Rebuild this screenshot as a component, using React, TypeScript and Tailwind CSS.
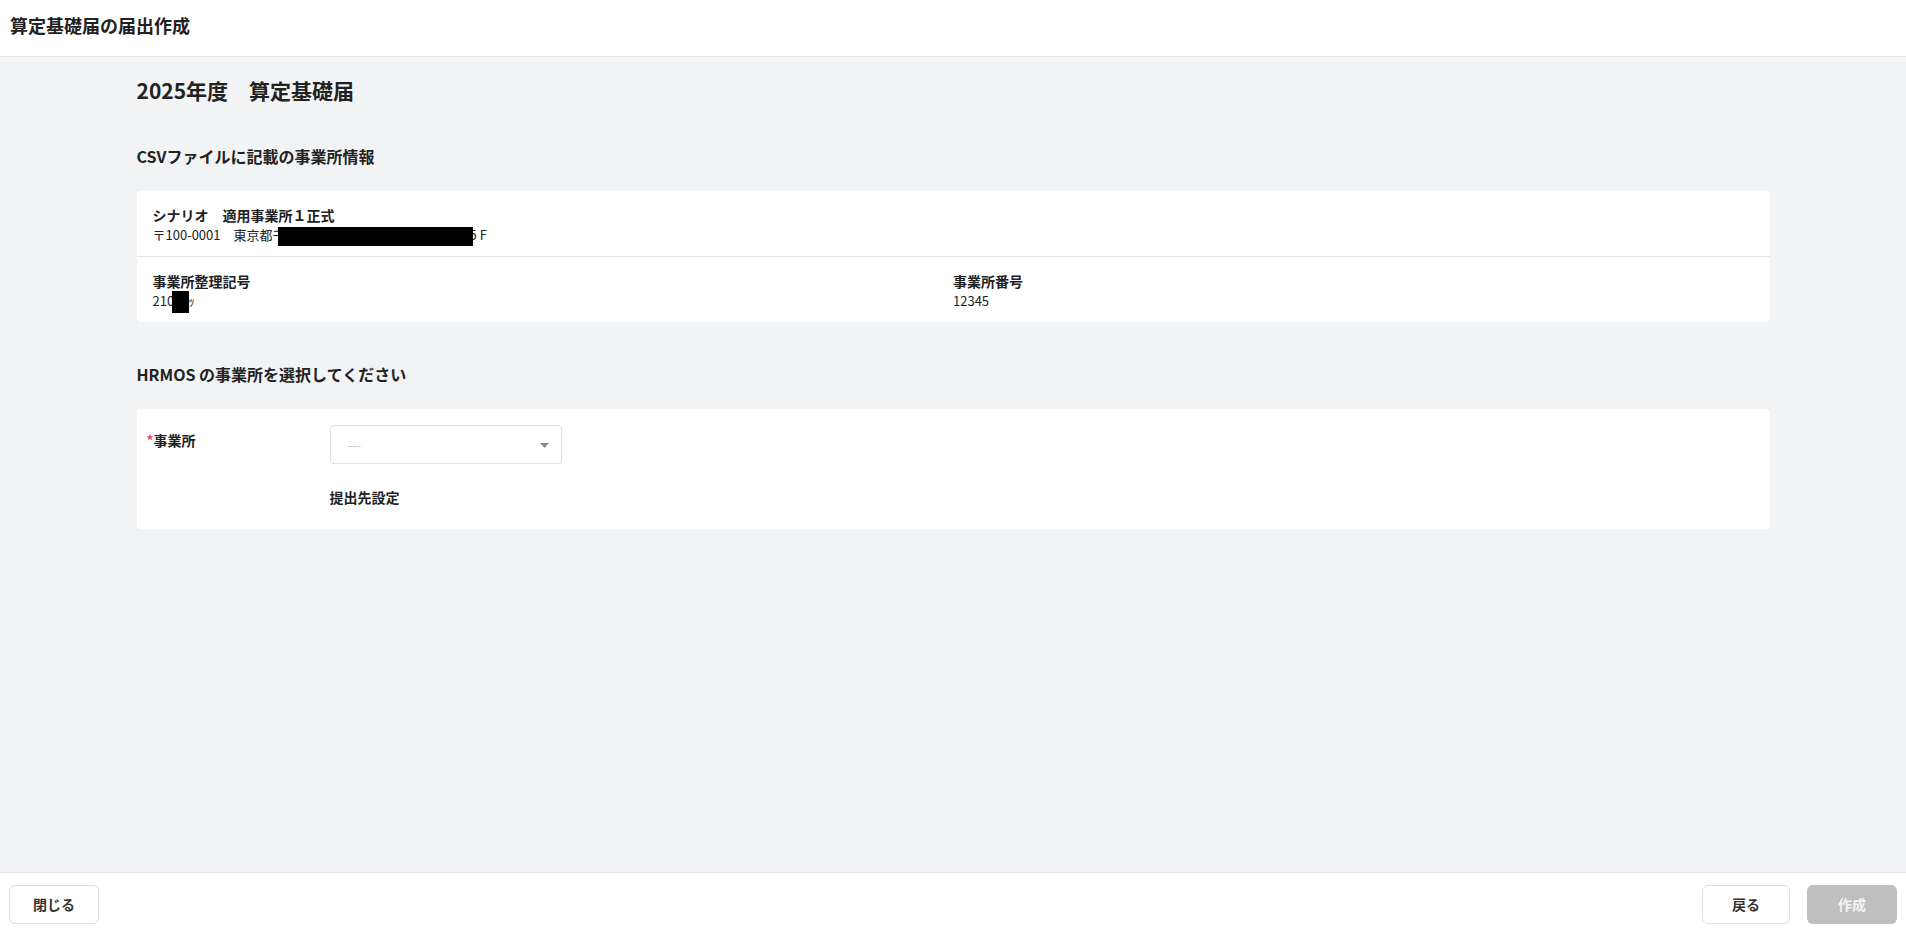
import React from "react";

export default function App() {
  return (
    <div className="h-screen flex flex-col bg-[#f2f3f5] text-[#222] font-['Noto_Sans_CJK_JP','Noto_Sans',sans-serif] overflow-hidden">
      {/* Header */}
      <header className="h-[57px] shrink-0 bg-white border-b border-[#e3e5ea] px-[10px] pt-[11px]">
        <h1 className="text-[18px] leading-7 font-bold text-[#222]">算定基礎届の届出作成</h1>
      </header>

      {/* Main */}
      <main className="flex-1 overflow-hidden">
        <div className="w-[1633px] mx-auto pt-[19px]">
          <h2 className="text-[21px] leading-[28px] font-bold">2025年度　算定基礎届</h2>

          <h3 className="mt-[40px] text-[16px] leading-6 font-bold">CSVファイルに記載の事業所情報</h3>

          <section className="mt-[23px] bg-white rounded-[4px]">
            <div className="px-4 pt-[14px] pb-[11px] border-b border-[#e4e4e4]">
              <div className="text-[14px] leading-5 font-bold">シナリオ　適用事業所１正式</div>
              <div className="text-[13px] leading-5 whitespace-nowrap">
                〒100-0001　東京都千
                <span className="relative z-10 inline-block align-middle ml-[-8px] w-[195px] h-[19px] bg-black -my-[2px]"></span>
                <span className="ml-[-3px]">5 F</span>
              </div>
            </div>
            <div className="grid grid-cols-2 px-4 pt-[14px] pb-[11px]">
              <div>
                <div className="text-[14px] leading-5 font-bold">事業所整理記号</div>
                <div className="text-[13px] leading-5 whitespace-nowrap">
                  210
                  <span className="relative z-10 inline-block align-middle ml-[-2px] w-[17px] h-[22px] bg-black -my-[3px]"></span>
                  <span className="ml-[-1px]">ｯ</span>
                </div>
              </div>
              <div>
                <div className="text-[14px] leading-5 font-bold">事業所番号</div>
                <div className="text-[13px] leading-5">12345</div>
              </div>
            </div>
          </section>

          <h3 className="mt-[40px] text-[16px] leading-6 font-bold">HRMOS の事業所を選択してください</h3>

          <section className="mt-[23px] bg-white rounded-[4px] pl-[10px] pt-[16px] pb-[22px]">
            <div className="flex items-start">
              <div className="w-[183px] shrink-0 pt-[5px] text-[14px] leading-5 font-bold">
                <span className="text-[#f04b4b]">*</span>事業所
              </div>
              <div className="flex flex-col">
                <div className="w-[232px] h-[39px] border border-[#dcdfe6] rounded-[4px] bg-white flex items-center justify-between pl-[17px] pr-[12px]">
                  <span className="text-[13px] text-[#c0c4cc]">---</span>
                  <svg width="9" height="5" viewBox="0 0 9 5" className="mt-[1px]">
                    <path d="M0 0 H9 L4.5 5 Z" fill="#7b8aa0" />
                  </svg>
                </div>
                <div className="mt-[23px] text-[14px] leading-5 font-bold">提出先設定</div>
              </div>
            </div>
          </section>
        </div>
      </main>

      {/* Footer */}
      <footer className="h-14 shrink-0 bg-white border-t border-[#e3e5ea] flex items-start justify-between px-[9px] pt-[12px]">
        <button className="w-[90px] h-[39px] rounded-[6px] border border-[#dcdfe6] bg-white text-[14px] font-bold text-[#333]">
          閉じる
        </button>
        <div className="flex gap-[17px]">
          <button className="w-[88px] h-[39px] rounded-[6px] border border-[#dcdfe6] bg-white text-[14px] font-bold text-[#333]">
            戻る
          </button>
          <button className="w-[90px] h-[39px] rounded-[6px] bg-[#bfbfbf] text-[14px] font-bold text-[#f3f3f3]">
            作成
          </button>
        </div>
      </footer>
    </div>
  );
}
